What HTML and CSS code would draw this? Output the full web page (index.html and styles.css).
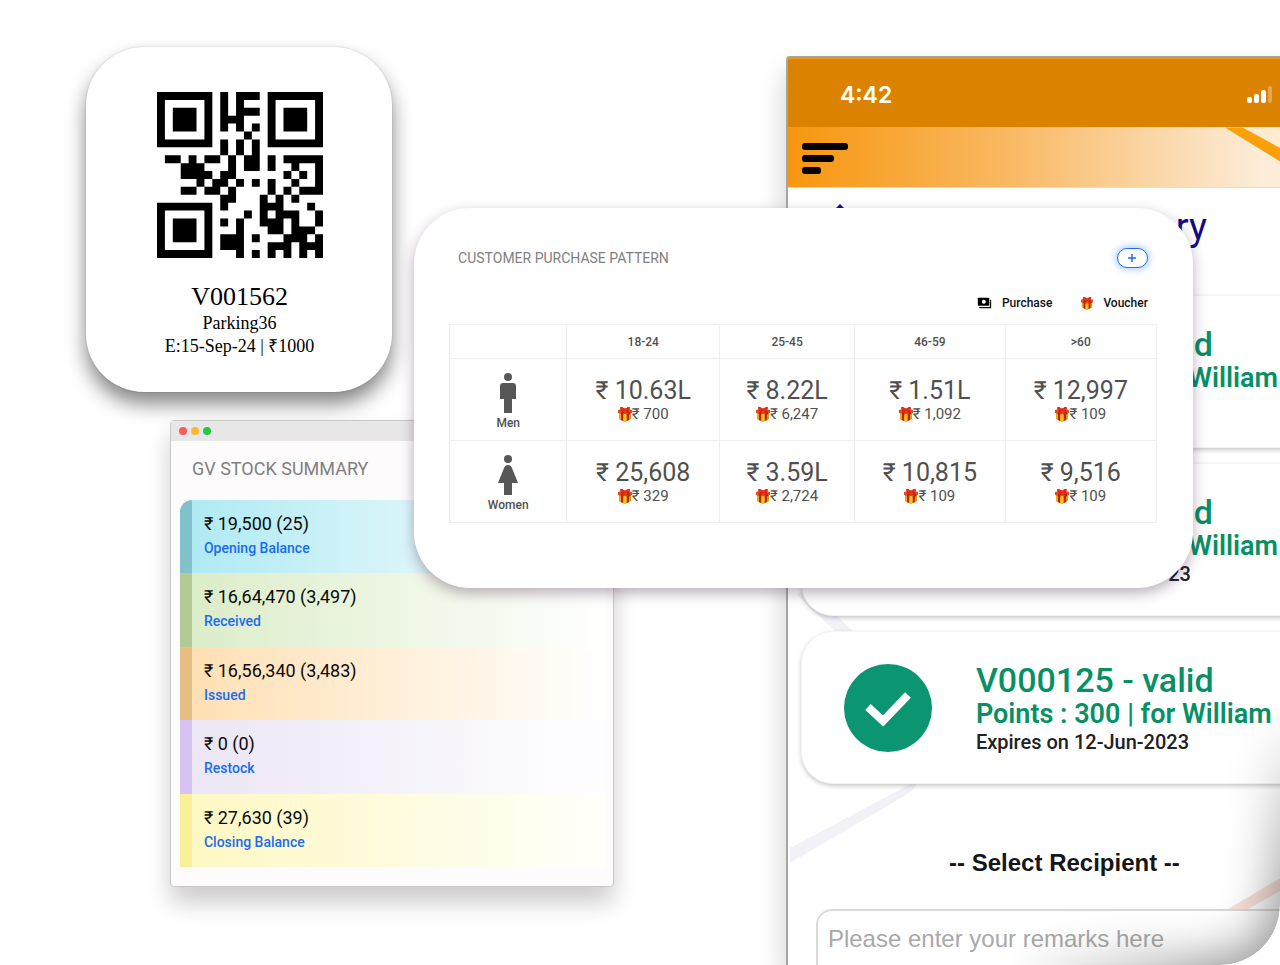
FILE: index.html
```html
<!DOCTYPE html>
<html lang="en">
<head>
<meta charset="utf-8">
<meta name="viewport" content="width=device-width, initial-scale=1">
<title>Gift vouchers</title>
<link rel="stylesheet" href="styles.css">
</head>
<body>
<svg class="defs" aria-hidden="true">
  <symbol id="gift" viewBox="1 1 14 15">
    <path d="M2 6l6 2 6-2v7l-6 3-6-3z" fill="#d99a06"/>
    <path d="M2 6l6 2v8l-6-3z" fill="#e8ab14"/>
    <path d="M1 4l7-2 7 2v3L8 9 1 7z" fill="#d9501a"/>
    <path d="M4 7l2 1v7l-2-1zM10 8l2-1v7l-2 1z" fill="#c81e12"/>
    <path d="M3 4l3-1 7 3v2l-2 1V7zM13 4l-3-1-6 3v2l2 1V7z" fill="#c81e12"/>
    <path d="M8 4C6 0 3 0 3 2c0 1 2 3 5 3 3 0 5-2 5-3 0-2-3-2-5 2z" fill="#e8281a"/>
    <path d="M7 8h2v7l-1 1-1-1z" fill="#f3c12c"/>
  </symbol>
  <symbol id="money" viewBox="0 0 22 18">
    <path d="M2 1h15a1 1 0 0 1 1 1v10a1 1 0 0 1-1 1H2a1 1 0 0 1-1-1V2a1 1 0 0 1 1-1z"/>
    <circle cx="10" cy="7" r="3" fill="#fff"/>
    <path d="M20 4v12H3" fill="none" stroke="currentColor" stroke-width="2"/>
  </symbol>
</svg>
<main class="stage">

  <section class="phone" aria-label="Voucher app">
    <div class="status">
      <span class="clock">4:42</span>
      <svg class="signal" viewBox="0 0 26 18" aria-hidden="true">
        <rect x="0" y="11" width="5" height="6" rx="2"/><rect x="7" y="8" width="5" height="9" rx="2"/><rect x="14" y="4" width="5" height="13" rx="2"/><rect x="21" y="0" width="4" height="17" rx="2" opacity=".3"/>
      </svg>
    </div>
    <header class="appbar">
      <button class="menu" type="button" aria-label="Menu"><i></i><i></i><i></i></button>
      <svg class="ribbon" viewBox="0 0 120 60" aria-hidden="true"><path d="M16 0l104 56V0z" fill="#fdebd2"/><path d="M0 0h18l102 56v18z" fill="#f9a10b"/></svg>
    </header>
    <div class="screen">
      <svg class="backdrop" viewBox="0 0 552 778" aria-hidden="true">
        <path d="M20 400l46 44h-18L8 406z M2 660v15l116-68q12-8 10-14z" fill="#f2f1f8"/>
        <path d="M440 721l112-66v14l-92 52z" fill="#f8e2da"/>
      </svg>
      <h1 class="screen-title">
        <svg viewBox="0 0 30 30" aria-hidden="true"><path d="M15 0l15 15-4 4L15 9 4 19l-4-4z"/></svg>
        <span>ry</span>
      </h1>
      <ul class="vouchers">
        <li class="voucher tail">
          <svg class="tick" viewBox="0 0 88 88" aria-hidden="true"><circle cx="44" cy="44" r="44"/><path d="M24 43l15 14 25-26"/></svg>
          <div><h2>d</h2><p class="points">William</p></div>
        </li>
        <li class="voucher tail">
          <svg class="tick" viewBox="0 0 88 88" aria-hidden="true"><circle cx="44" cy="44" r="44"/><path d="M24 43l15 14 25-26"/></svg>
          <div><h2>d</h2><p class="points">William</p><p class="expiry">23</p></div>
        </li>
        <li class="voucher">
          <svg class="tick" viewBox="0 0 88 88" aria-hidden="true"><circle cx="44" cy="44" r="44"/><path d="M24 43l15 14 25-26"/></svg>
          <div><h2>V000125 - valid</h2><p class="points">Points : 300 | for William</p><p class="expiry">Expires on 12-Jun-2023</p></div>
        </li>
      </ul>
      <select class="recipient" aria-label="Recipient"><option>-- Select Recipient --</option></select>
      <textarea class="remarks" aria-label="Remarks" placeholder="Please enter your remarks here"></textarea>
    </div>
  </section>
  <div class="corner"></div>

  <section class="ticket">
    <svg class="qr" viewBox="0 0 21 21" role="img" aria-label="QR code">
      <path fill-rule="evenodd" d="M0 0h7v7h-7zM1 1v5h5v-5zM2 2h3v3h-3zM14 0h7v7h-7zM15 1v5h5v-5zM16 2h3v3h-3zM0 14h7v7h-7zM1 15v5h5v-5zM2 16h3v3h-3z"/>
      <path d="M8 0h1v5h-1zM10 0h3v1h-3zM10 1h1v1h-1zM10 2h3v1h-3zM9 3h2v1h-2zM10 4h1v1h-1zM12 4h1v1h-1zM11 5h1v1h-1zM8 6h1v2h-1zM10 6h1v2h-1zM12 6h1v2h-1zM1 8h2v1h-2zM4 8h1v1h-1zM6 8h2v1h-2zM9 8h1v2h-1zM11 8h2v2h-2zM14 8h1v2h-1zM16 8h5v1h-5zM3 9h3v1h-3zM17 9h1v1h-1zM20 9h1v3h-1zM3 10h4v1h-4zM8 10h2v1h-2zM16 10h1v1h-1zM18 10h1v1h-1zM5 11h1v1h-1zM7 11h2v1h-2zM10 11h1v1h-1zM12 11h1v1h-1zM14 11h1v2h-1zM17 11h1v1h-1zM3 12h2v1h-2zM6 12h2v1h-2zM9 12h1v1h-1zM16 12h1v1h-1zM18 12h3v1h-3zM8 13h2v1h-2zM13 13h1v1h-1zM15 13h1v1h-1zM17 13h1v1h-1zM8 14h1v1h-1zM13 14h3v1h-3zM19 14h1v1h-1zM11 15h1v1h-1zM13 15h1v1h-1zM15 15h3v1h-3zM20 15h1v2h-1zM8 16h1v1h-1zM10 16h1v2h-1zM13 16h3v1h-3zM17 16h1v1h-1zM14 17h2v1h-2zM17 17h3v1h-3zM8 18h3v2h-3zM12 18h1v1h-1zM16 18h3v1h-3zM20 18h1v1h-1zM14 19h3v1h-3zM18 19h3v1h-3zM10 20h1v1h-1zM12 20h1v1h-1zM14 20h1v1h-1zM16 20h1v1h-1zM18 20h1v1h-1zM20 20h1v1h-1z"/>
    </svg>
    <h2>V001562</h2>
    <p>Parking36</p>
    <p>E:15-Sep-24 | ₹1000</p>
  </section>

  <section class="stock">
    <div class="titlebar"><i class="red"></i><i class="amber"></i><i class="green"></i></div>
    <h2>GV STOCK SUMMARY</h2>
    <ul>
      <li class="opening"><strong>₹ 19,500 (25)</strong><a href="#opening">Opening Balance</a></li>
      <li class="received"><strong>₹ 16,64,470 (3,497)</strong><a href="#received">Received</a></li>
      <li class="issued"><strong>₹ 16,56,340 (3,483)</strong><a href="#issued">Issued</a></li>
      <li class="restock"><strong>₹ 0 (0)</strong><a href="#restock">Restock</a></li>
      <li class="closing"><strong>₹ 27,630 (39)</strong><a href="#closing">Closing Balance</a></li>
    </ul>
  </section>

  <section class="pattern">
    <header>
      <h2>CUSTOMER PURCHASE PATTERN</h2>
      <button type="button" aria-label="Add"><svg viewBox="0 0 10 10" aria-hidden="true"><path d="M5 1v8M1 5h8"/></svg></button>
    </header>
    <div class="legend">
      <span><svg class="money"><use href="#money"/></svg>Purchase</span>
      <span><svg class="gift"><use href="#gift"/></svg>Voucher</span>
    </div>
    <table>
      <colgroup><col class="who"><col class="a"><col class="b"><col class="c"><col class="d"></colgroup>
      <thead><tr><td></td><th scope="col">18-24</th><th scope="col">25-45</th><th scope="col">46-59</th><th scope="col">&gt;60</th></tr></thead>
      <tbody>
        <tr>
          <th scope="row"><svg class="person" viewBox="0 0 20 40" aria-hidden="true"><circle cx="10" cy="4" r="4"/><path d="M5 10h10q3 0 3 3v13h-4v14H6V26H2V13q0-3 3-3z"/></svg>Men</th>
          <td><b>₹ 10.63L</b><span><svg class="gift"><use href="#gift"/></svg>₹ 700</span></td>
          <td><b>₹ 8.22L</b><span><svg class="gift"><use href="#gift"/></svg>₹ 6,247</span></td>
          <td><b>₹ 1.51L</b><span><svg class="gift"><use href="#gift"/></svg>₹ 1,092</span></td>
          <td><b>₹ 12,997</b><span><svg class="gift"><use href="#gift"/></svg>₹ 109</span></td>
        </tr>
        <tr>
          <th scope="row"><svg class="person" viewBox="0 0 20 40" aria-hidden="true"><circle cx="10" cy="4" r="4"/><path d="M10 10q3 0 4 3l6 15h-6v12H6V28H0l6-15q1-3 4-3z"/></svg>Women</th>
          <td><b>₹ 25,608</b><span><svg class="gift"><use href="#gift"/></svg>₹ 329</span></td>
          <td><b>₹ 3.59L</b><span><svg class="gift"><use href="#gift"/></svg>₹ 2,724</span></td>
          <td><b>₹ 10,815</b><span><svg class="gift"><use href="#gift"/></svg>₹ 109</span></td>
          <td><b>₹ 9,516</b><span><svg class="gift"><use href="#gift"/></svg>₹ 109</span></td>
        </tr>
      </tbody>
    </table>
  </section>
</main>
</body>
</html>
```

FILE: styles.css
```css
* { box-sizing: border-box; }
body { margin: 0; background: #fff; font-family: Roboto, "Liberation Sans", sans-serif; color: #111; }
h1, h2, p, ul { margin: 0; padding: 0; font-weight: 400; }
ul { list-style: none; }
.defs { display: none; }

/* Free canvas holding the overlapping windows */
.stage { position: relative; min-height: 100vh; overflow: hidden; border-bottom-right-radius: 60px; }

/* Phone */
.phone {
  position: absolute; left: 61.4%; right: -5%; top: 56px; bottom: 0; overflow: hidden;
  border: 1px solid #a5a5a5; border-left-width: 2px; border-bottom: 0; border-radius: 4px 4px 0 0;
  background: #fff;
  box-shadow: 0 16px 28px rgba(0,0,0,.2);
}
.status { display: flex; align-items: center; justify-content: space-between; height: 70px; padding: 4px 70px 0 52px; background: #db8300; border-top: 2px solid #f59307; }
.clock { font: 600 23px/30px Inter, sans-serif; color: #fff; }
.signal { width: 26px; height: 18px; fill: #fff; }
.appbar { position: relative; height: 61px; padding: 16px 14px; background: linear-gradient(90deg, #f7960f, #f9b963 40%, #fcecd8 85%); border-bottom: 1px solid #e6dccf; }
.ribbon { position: absolute; right: 0; top: 0; width: 118px; height: 60px; }
.menu { display: flex; flex-direction: column; gap: 5px; padding: 0; border: 0; background: none; }
.menu i { height: 7px; width: 46px; border-radius: 3px; background: #000; }
.menu i:nth-child(2) { width: 32px; }
.menu i:nth-child(3) { width: 19px; }
.screen { position: relative; padding: 14px 0 0 13px; }
.backdrop { position: absolute; left: 0; top: 0; width: 552px; height: 778px; }
.screen > :not(.backdrop) { position: relative; }
.screen-title { display: flex; justify-content: space-between; height: 93px; padding: 2px 136px 0 24px; font-size: 38px; line-height: 46px; color: #130a87; }
.screen-title svg { width: 30px; height: 30px; fill: #130a87; }
.vouchers { display: grid; gap: 15px; }
.voucher { display: flex; gap: 44px; height: 153px; padding: 32px 42px; border: 1px solid #f4f4f4; border-radius: 32px; background: #fff; box-shadow: 0 2px 4px rgba(0,0,0,.22); white-space: nowrap; }
.tick { flex: none; width: 88px; height: 88px; }
.tick circle { fill: #0b9671; }
.tick path { fill: none; stroke: #fff; stroke-width: 8; }
.voucher h2 { font-size: 34px; line-height: 33px; font-weight: 500; color: #078f66; }
.points { font-size: 27px; line-height: 35px; font-weight: 600; color: #078f66; }
.expiry { font-size: 20px; line-height: 21px; font-weight: 500; color: #222; }
.tail h2 { width: 237px; text-align: right; }
.tail .points { width: 302px; text-align: right; }
.tail .expiry { width: 215px; text-align: right; }
.recipient { display: block; width: 100%; height: 40px; margin-top: 59px; padding: 0 15px 0 0; border: 0; background: none; appearance: none; font: 700 24px/40px "Liberation Sans", sans-serif; color: #161616; text-align: center; text-align-last: center; }
.remarks { display: block; width: 100%; height: 90px; margin: 26px 0 0 15px; padding: 13px 10px; border: 2px solid #dadada; border-radius: 16px; background: #fff; resize: none; font: 24px/30px "Liberation Sans", sans-serif; }
.remarks::placeholder { color: #a9a9a9; opacity: 1; }
/* Dark curl in the lower right corner of the canvas */
.corner {
  position: absolute; right: 0; bottom: 0; width: 320px; height: 280px;
  border-bottom-right-radius: 60px;
  box-shadow: inset -6px -6px 48px rgba(0,0,0,.42);
  pointer-events: none;
  mask-image: linear-gradient(to right, transparent 15%, #000 80%), linear-gradient(to bottom, transparent 10%, #000 75%);
  mask-composite: intersect;
}

/* QR ticket */
.ticket {
  position: absolute; left: 6.72%; top: 47px; width: 306px; height: 345px; padding: 45px 0 0 1px;
  display: flex; flex-direction: column; align-items: center;
  border-radius: 58px; background: #fff; box-shadow: 0 12px 20px rgba(0,0,0,.48), 0 0 2px rgba(0,0,0,.2);
  font-family: "Liberation Serif", serif; color: #000;
}
.qr { width: 166px; height: 166px; margin-bottom: 24px; }
.ticket h2 { font-size: 26px; line-height: 30px; }
.ticket p { font-size: 18px; line-height: 23px; }

/* Stock summary window */
.stock { position: absolute; left: 13.28%; top: 420px; width: 34.7%; padding-bottom: 19px; border: 1px solid #c8c8c8; border-radius: 4px; background: #fdfbfc; box-shadow: 0 16px 24px rgba(0,0,0,.2); }
.titlebar { display: flex; align-items: center; gap: 4px; height: 20px; padding-left: 8px; background: #e7e7e7; }
.titlebar i { width: 8px; height: 8px; border-radius: 50%; }
.red { background: #fc5b57; }
.amber { background: #fdb82c; }
.green { background: #27c740; }
.stock h2 { padding: 16px 21px 19px; font-size: 18px; line-height: 24px; color: #808080; }
.stock ul { display: grid; grid-auto-rows: 1fr; height: 367px; margin: 0 7px 0 9px; border-top-left-radius: 12px; overflow: hidden; }
.stock li { display: flex; flex-direction: column; gap: 2px; padding: 12px 12px 0; border-left: 12px solid; }
.stock strong { font-size: 18px; line-height: 24px; font-weight: 400; color: #0a0a0a; }
.stock a { font-size: 14px; line-height: 21px; font-weight: 500; color: #1a6cf0; text-decoration: none; }
.stock .opening { border-color: #80c1cc; background: linear-gradient(90deg, #b0eaf3, #fff); }
.stock .received { border-color: #b3c996; background: linear-gradient(90deg, #dcedc9, #fff); }
.stock .issued { border-color: #e6bf85; background: linear-gradient(90deg, #ffe0b4, #fff); }
.stock .restock { border-color: #d6c2f3; background: linear-gradient(90deg, #ece6f5, #fdfdff 90%); }
.stock .closing { border-color: #f8ef98; background: linear-gradient(90deg, #fef8c4, #fffffa); }

/* Purchase pattern card */
.pattern { position: absolute; left: 32.35%; top: 208px; width: 60.85%; height: 380px; padding: 40px 36px 0 35px; border-radius: 56px; background: #fff; box-shadow: 0 5px 14px rgba(70,30,70,.36); }
.pattern header { display: flex; justify-content: space-between; align-items: center; padding: 0 9px; }
.pattern h2 { font-size: 14px; line-height: 20px; color: #808080; }
.pattern button { display: grid; place-items: center; width: 31px; height: 20px; padding: 0; border: 1px solid #1f6ff2; border-radius: 10px; background: #fff; box-shadow: 0 0 6px 2px rgba(70,140,255,.4); }
.pattern button svg { width: 10px; height: 10px; fill: none; stroke: #1f6ff2; stroke-width: 1.5; }
.legend { display: flex; justify-content: flex-end; gap: 29px; padding: 25px 9px 11px; font-size: 12px; font-weight: 500; line-height: 20px; }
.legend span { display: flex; align-items: center; gap: 10px; }
.money { width: 15px; height: 12px; }
.gift { width: 14px; height: 15px; }
.legend .gift { width: 12px; height: 13px; }
table { width: 100%; border-collapse: collapse; table-layout: fixed; text-align: center; color: #505050; }
td, th { padding: 0; border: 1px solid #eee; font-weight: 400; }
.who { width: 16.6%; } .a { width: 21.6%; } .b { width: 19.1%; } .c { width: 21.3%; } .d { width: 21.4%; }
thead tr { height: 34px; }
thead th { font-size: 12px; font-weight: 500; }
tbody tr { height: 82px; }
tbody th { padding-top: 8px; font-size: 12px; font-weight: 500; line-height: 21px; }
tbody td { padding-top: 1px; }
.person { display: block; width: 20px; height: 40px; margin: 0 auto; fill: #575757; }
td b { display: block; font-size: 25px; line-height: 28px; font-weight: 400; }
td span { display: flex; justify-content: center; align-items: center; font-size: 15px; line-height: 19px; }
```
